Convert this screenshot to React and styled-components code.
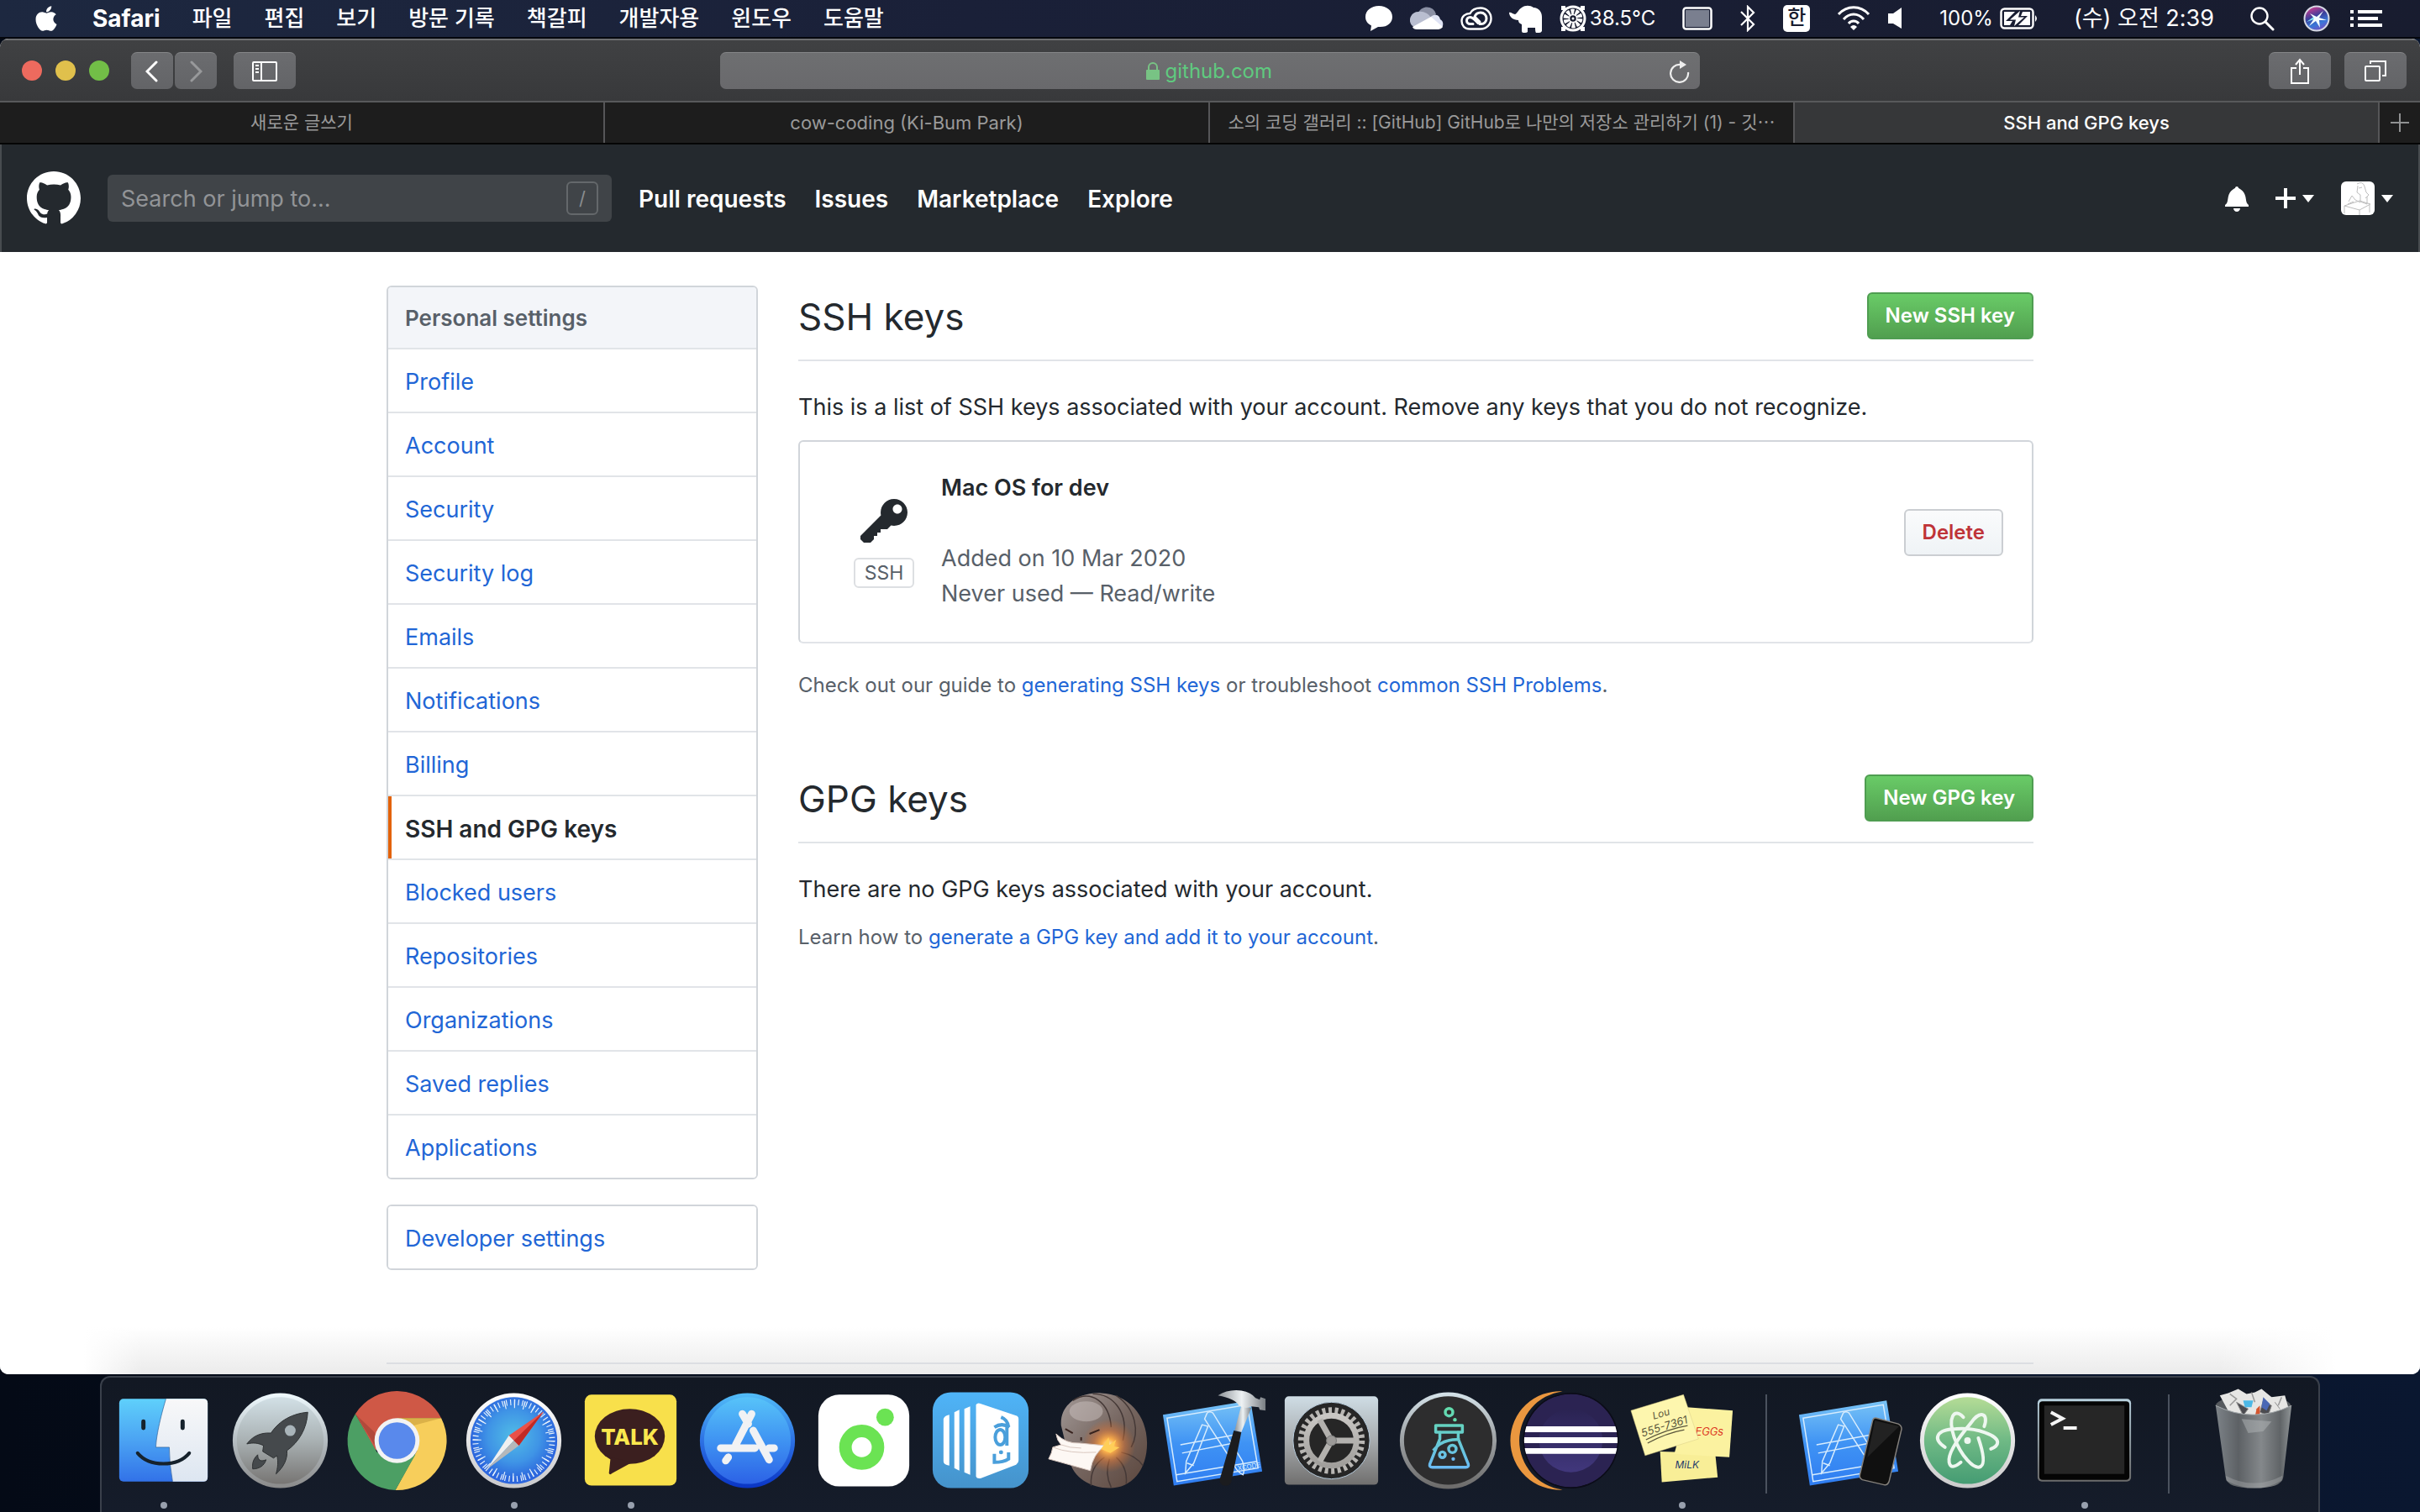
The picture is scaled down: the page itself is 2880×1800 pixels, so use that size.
import React from "react";
import styled, { createGlobalStyle } from "styled-components";
import { FaApple } from "react-icons/fa";

const GlobalStyle = createGlobalStyle`
  *, *::before, *::after { box-sizing: border-box; }
  html, body, #root { height: 100%; }
  body {
    margin: 0;
    background: #060d1c;
    font-family: Inter, "Noto Sans CJK KR", "Noto Sans", sans-serif;
    font-size: 27px;
    line-height: 42px;
    color: #24292e;
  }
  h2, p, ul, dl { margin: 0; padding: 0; }
  button, input { font: inherit; color: inherit; border: 0; padding: 0; margin: 0; background: none; }
  a { text-decoration: none; color: inherit; }
  svg { display: block; flex: none; }
`;

/* ---------- desktop ---------- */

const Desktop = styled.div`
  display: flex;
  flex-direction: column;
  height: 100vh;
  overflow: hidden;
  background: linear-gradient(90deg, #040a16, #0a1730);
`;

const MenuBar = styled.header`
  display: flex;
  align-items: center;
  justify-content: space-between;
  flex: none;
  height: 46px;
  padding: 0 45px 0 38px;
  background: linear-gradient(90deg, #1d2840, #1a2038 40%, #181c2f);
  border-bottom: 2px solid #05070d;
  color: #fff;
  font-size: 26px;
  line-height: 32px;
`;

const Menus = styled.nav`
  display: flex;
  align-items: center;
  gap: 38px;
`;

const MenuItem = styled.button`
  font-size: ${(p) => (p.$app ? 28 : 26)}px;
  font-weight: ${(p) => (p.$app ? 700 : 500)};
  white-space: nowrap;
`;

const Group = styled.div`
  display: flex;
  align-items: center;
  gap: ${(p) => p.$gap}px;
  white-space: nowrap;
`;

const Reading = styled.span`
  font-size: 24px;
`;

const Clock = styled.time`
  font-size: 27px;
`;

/* ---------- browser window ---------- */

const Window = styled.section`
  display: flex;
  flex-direction: column;
  flex: 1;
  min-height: 0;
  border-radius: 10px;
  overflow: hidden;
  background: #fff;
`;

const Toolbar = styled.div`
  display: grid;
  grid-template-columns: 1fr minmax(0, 1166px) 1fr;
  align-items: center;
  flex: none;
  height: 76px;
  padding: 0 16px;
  border-top: 2px solid #6d6e70;
  border-bottom: 2px solid #58595b;
  background: linear-gradient(#404143, #38393b);
`;

const ToolSide = styled.div`
  display: flex;
  align-items: center;
  gap: ${(p) => p.$gap}px;
  justify-content: ${(p) => (p.$end ? "flex-end" : "flex-start")};
`;

const Lights = styled.div`
  display: flex;
  gap: 16px;
  padding-left: 10px;
`;

const Light = styled.button`
  width: 24px;
  height: 24px;
  border-radius: 50%;
  background: ${(p) => p.$color};
`;

const ToolButton = styled.button`
  display: flex;
  align-items: center;
  justify-content: center;
  width: ${(p) => (p.$wide ? 74 : 50)}px;
  height: 44px;
  border-radius: 7px;
  border-top: 1px solid #858688;
  background: linear-gradient(#6b6c6f, #636467);
`;

const AddressBar = styled.form`
  display: grid;
  grid-template-columns: 1fr auto 1fr;
  align-items: center;
  height: 44px;
  padding: 0 12px;
  border-radius: 7px;
  border-top: 1px solid #858688;
  background: linear-gradient(#6e6f71, #69696c);
`;

const Address = styled.label`
  grid-column: 2;
  display: flex;
  align-items: center;
  gap: 7px;
`;

const AddressInput = styled.input`
  width: 130px;
  color: #5fca7f;
  font-size: 24px;
  line-height: 32px;
`;

const Reload = styled.button`
  justify-self: end;
`;

const TabBar = styled.div`
  display: grid;
  grid-template-columns: 720fr 720fr 696fr 696fr 48px;
  flex: none;
  height: 50px;
  border-bottom: 2px solid #050505;
  background: #1d1d1d;
`;

const Tab = styled.button`
  min-width: 0;
  padding: 0 14px;
  border-right: 2px solid #565658;
  background: ${(p) => (p.$active ? "#363739" : "transparent")};
  color: ${(p) => (p.$active ? "#fff" : "#9a9a9a")};
  font-size: 22px;
  font-weight: ${(p) => (p.$active ? 500 : 400)};
  line-height: 32px;
  white-space: nowrap;
  overflow: hidden;
  &:lang(ko) { font-size: 21px; }
`;

const NewTab = styled.button`
  display: flex;
  align-items: center;
  justify-content: center;
`;

/* ---------- site header ---------- */

const SiteHeader = styled.header`
  display: flex;
  align-items: center;
  flex: none;
  gap: 32px;
  height: 128px;
  padding: 0 32px;
  background: #24292e;
  box-shadow: inset 2px 0 #484c50, inset -2px 0 #484c50;
  color: #fff;
`;

const SearchBox = styled.label`
  display: flex;
  align-items: center;
  width: 600px;
  height: 56px;
  padding: 0 16px;
  border-radius: 6px;
  background: #404448;
`;

const SearchInput = styled.input`
  flex: 1;
  min-width: 0;
  padding-top: 2px;
  outline: 0;
  &::placeholder { color: #929497; opacity: 1; }
`;

const Slash = styled.kbd`
  display: flex;
  align-items: center;
  justify-content: center;
  width: 38px;
  height: 40px;
  border: 2px solid #64686b;
  border-radius: 6px;
  color: #8a8d90;
  font-family: inherit;
  font-size: 22px;
`;

const SiteNav = styled.nav`
  display: flex;
  gap: 34px;
  flex: 1;
  padding-top: 2px;
  font-size: 28px;
  font-weight: 600;
`;

const HeaderButton = styled.button`
  display: flex;
  align-items: center;
  gap: 8px;
`;

const Caret = styled.span`
  width: 14px;
  border: 7px solid transparent;
  border-top: 9px solid #fff;
  border-bottom: 0;
`;

const Avatar = styled.span`
  width: 40px;
  height: 40px;
  border-radius: 6px;
  overflow: hidden;
  background: #fff;
`;

/* ---------- page ---------- */

const Page = styled.div`
  flex: 1;
  min-height: 0;
  overflow: auto;
  background:
    linear-gradient(90deg, #fff 100px, transparent 170px, transparent calc(100% - 240px), #fff calc(100% - 100px)),
    linear-gradient(0deg, #ebebeb, #fff 56px);
`;

const Container = styled.div`
  max-width: 1960px;
  margin: 0 auto;
  padding-top: 40px;
`;

const Columns = styled.div`
  display: flex;
  gap: 48px;
`;

const Sidebar = styled.aside`
  flex: none;
  width: 442px;
`;

const SideMenu = styled.nav`
  display: flex;
  flex-direction: column;
  margin-bottom: 30px;
  border: 2px solid #d1d5da;
  border-radius: 6px;
  overflow: hidden;
`;

const SideHeading = styled.div`
  height: 74px;
  padding: 16px 20px;
  border-bottom: 2px solid #e1e4e8;
  background: #f3f5f9;
  color: #586069;
  font-size: 26px;
  font-weight: 600;
`;

const SideLink = styled.a`
  padding: 18px 20px 14px;
  border-bottom: 2px solid #e1e4e8;
  background: #fff;
  color: ${(p) => (p.$current ? "#24292e" : "#2166d6")};
  font-size: ${(p) => (p.$current ? 28 : 27)}px;
  font-weight: ${(p) => (p.$current ? 600 : 400)};
  box-shadow: ${(p) => (p.$current ? "inset 4px 0 #e36209" : "none")};
  &:last-child { border-bottom: 0; }
`;

const Main = styled.main`
  flex: 1;
  min-width: 0;
`;

const Section = styled.section`
  margin-bottom: 78px;
`;

const Subhead = styled.div`
  display: flex;
  align-items: flex-start;
  justify-content: space-between;
  height: 90px;
  padding-top: 8px;
  border-bottom: 2px solid #e1e4e8;
`;

const Title = styled.h2`
  font-size: 44px;
  line-height: 58px;
  font-weight: 400;
`;

const Lead = styled.p`
  padding-top: 34px;
`;

const Button = styled.button`
  height: 56px;
  padding: 0 20px;
  border: 2px solid ${(p) => (p.$danger ? "#cbced2" : "#4f9d51")};
  border-radius: 6px;
  background: ${(p) => (p.$danger ? "linear-gradient(#fafbfc, #eff3f6)" : "linear-gradient(#69cb67, #519f4f)")};
  color: ${(p) => (p.$danger ? "#bf3338" : "#fff")};
  font-size: 24px;
  line-height: 40px;
  font-weight: 600;
`;

const KeyCard = styled.div`
  display: flex;
  align-items: center;
  margin: 18px 0 30px;
  padding: 34px 34px 30px 64px;
  border: 2px solid #d1d5da;
  border-bottom-color: #e1e4e8;
  border-radius: 6px;
`;

const KeyMark = styled.div`
  display: flex;
  flex-direction: column;
  align-items: center;
  gap: 10px;
  width: 72px;
  margin-right: 32px;
  padding-bottom: 4px;
`;

const KeyAction = styled.div`
  padding-bottom: 26px;
`;

const Badge = styled.span`
  width: 72px;
  border: 2px solid #dddfe2;
  border-radius: 6px;
  color: #586069;
  font-size: 23px;
  line-height: 32px;
  text-align: center;
`;

const KeyInfo = styled.div`
  flex: 1;
  padding-bottom: 6px;
  color: #586069;
`;

const KeyName = styled.strong`
  display: block;
  margin-bottom: 42px;
  color: #24292e;
  font-weight: 600;
`;

const Note = styled.p`
  margin-top: ${(p) => (p.$tight ? 16 : 0)}px;
  color: #586069;
  font-size: 24px;
  line-height: 40px;
`;

const TextLink = styled.a`
  color: #2166d6;
`;

const Footer = styled.footer`
  margin-top: 80px;
  border-top: 2px solid #dcdee2;
`;

/* ---------- dock ---------- */

const Dock = styled.nav`
  display: flex;
  align-self: center;
  flex: none;
  height: 162px;
  margin-top: 2px;
  padding: 0 8px 0 4px;
  border: 2px solid #3a404b;
  border-bottom: 0;
  border-radius: 12px 12px 0 0;
  background: linear-gradient(#121823, #151c2a);
`;

const DockItem = styled.button`
  display: flex;
  flex-direction: column;
  align-items: center;
  gap: 4px;
  width: 139px;
`;

const RunningDot = styled.span`
  width: 8px;
  height: 8px;
  border-radius: 50%;
  background: #98a0ae;
`;

const Separator = styled.span`
  width: 2px;
  height: 118px;
  margin: 20px 30px 0;
  background: #4b525e;
`;

/* ---------- menu bar drawings ---------- */

const ChatIcon = () => (
  <svg width="34" height="32" viewBox="0 0 34 32">
    <path fill="#fff" d="M17 1C8 1 1 6.500 1 14c0 5 2.500 8 7 10.500L7 31l9-5c11 1 17-5 17-12C33 6.500 26 1 17 1z" />
  </svg>
);

const CloudIcon = () => (
  <svg width="40" height="28" viewBox="0 0 40 28">
    <path fill="#8b90a4" d="M10 7C14-2 28-2 31 9l-9 8z" />
    <path fill="#b9bed0" d="M10 6a10 10 0 0 0-8 16l4 3 19-12C22 8 16 5 10 6z" />
    <path fill="#dfe3f4" d="M24 13c4-5 11-4 12 2 4 2 4 7 2 10z" />
    <path fill="#fff" d="M3 24 25 12l14 12q-2 3-5 3H8q-4 0-5-3z" />
  </svg>
);

const CreativeCloudIcon = () => (
  <svg width="38" height="28" viewBox="0 0 38 28" fill="none" stroke="#fff" strokeLinecap="round">
    <path strokeWidth="2.400" d="M11 26.500C5 26.500 1.500 22.500 1.500 17S6 8 11.500 8C13.500 4 18 1.500 24 1.500c7 0 12.500 5.500 12.500 12.500S31 26.500 24 26.500z" />
    <path strokeWidth="3" d="M15 20.500h-3.500a4 4 0 0 1 0-8c3 0 4.500 2 6.500 4l3 3" />
    <path strokeWidth="3" d="m23 18-6-6c1-3 4-5 7-5 4 0 7 3 7 7s-3 6.500-6 6.500h-2" />
  </svg>
);

const ElephantIcon = () => (
  <svg width="40" height="34" viewBox="0 0 40 34">
    <path fill="#fff" d="M0 10c2-1 4 2 7 2 3-1 4-6 8-8 4-3 10-3 14 0 6 0 10 5 10 11v17q-1 2-3 2h-4q-1-1-1-6h-9v5q-1 1-3 1h-2q-2 0-2-2v-8c-3-1-4-3-4-5C5 19 0 15 0 10z" />
  </svg>
);

const FanIcon = () => (
  <svg width="32" height="32" viewBox="0 0 32 32">
    <path fill="#fff" d="M2 1h5v5H2zM25 1h5v5h-5zM2 26h5v5H2zM25 26h5v5h-5z" />
    <circle cx="16" cy="16" r="14" fill="#181c2f" stroke="#fff" strokeWidth="3" />
    {[0, 36, 72, 108, 144, 180, 216, 252, 288, 324].map((a) => (
      <path key={a} fill="#fff" transform={`rotate(${a} 16 16)`} d="m14.500 12-1.500-7q3-1 5 0l-1.500 7z" />
    ))}
    <circle cx="16" cy="16" r="4.500" fill="#181c2f" stroke="#fff" strokeWidth="1.500" />
    <circle cx="16" cy="16" r="1.500" fill="#fff" />
  </svg>
);

const DisplayIcon = () => (
  <svg width="36" height="28" viewBox="0 0 36 28">
    <rect x="1.500" y="1.500" width="33" height="25" rx="3" fill="none" stroke="#fff" strokeWidth="2.500" />
    <rect x="4" y="4" width="28" height="20" fill="#7a7f8f" />
  </svg>
);

const BluetoothIcon = () => (
  <svg width="20" height="32" viewBox="0 0 20 32" fill="none" stroke="#fff" strokeWidth="2.200">
    <path d="m2 8 15 15-7 7V2l7 7L2 24" />
  </svg>
);

const InputSource = styled.span`
  width: 32px;
  height: 32px;
  border-radius: 5px;
  background: #fff;
  color: #181c2f;
  font-size: 24px;
  font-weight: 500;
  line-height: 30px;
  text-align: center;
`;

const WifiIcon = () => (
  <svg width="40" height="30" viewBox="0 0 40 30" fill="none" stroke="#fff" strokeWidth="3">
    <path d="M2 10C12-1 28-1 38 10M8 16c7-8 17-8 24 0M14 21c3-4 9-4 12 0" />
    <path d="m20 29-4-4q4-4 8 0z" fill="#fff" stroke="none" />
  </svg>
);

const SpeakerIcon = () => (
  <svg width="20" height="28" viewBox="0 0 20 28">
    <path fill="#fff" d="M1 8h6L17 1v25L7 20H1z" />
  </svg>
);

const BatteryIcon = () => (
  <svg width="46" height="26" viewBox="0 0 46 26">
    <rect x="1.500" y="1.500" width="38" height="23" rx="4" fill="none" stroke="#fff" strokeWidth="2.400" />
    <path fill="#fff" d="M5 5h13l-11 11h8l-3 5H5zM27 5h9v16H22l11-11h-8zM42 9q4 4 0 8z" />
    <path fill="#fff" d="M24 4 12 14.500h7L17 22l12-10.500h-7z" />
  </svg>
);

const SpotlightIcon = () => (
  <svg width="30" height="30" viewBox="0 0 30 30" fill="none" stroke="#fff">
    <circle cx="12" cy="12" r="9.500" strokeWidth="2.400" />
    <path d="m19 19 9 9" strokeWidth="3" strokeLinecap="round" />
  </svg>
);

const SiriIcon = () => (
  <svg width="32" height="32" viewBox="0 0 32 32">
    <defs>
      <linearGradient id="siri" x1=".3" y1="0" x2=".7" y2="1">
        <stop offset="0" stopColor="#d23b8d" />
        <stop offset=".4" stopColor="#3b3f9a" />
        <stop offset=".7" stopColor="#3a78d8" />
        <stop offset="1" stopColor="#7b4bc0" />
      </linearGradient>
    </defs>
    <circle cx="16" cy="16" r="14.500" fill="url(#siri)" stroke="#d5d8e4" strokeWidth="2" />
    <path fill="#7fe6f5" d="m16 16-12 4 10-7z" />
    <path fill="#f3fdff" d="m16 14 8-7-5 8 9 3-9 0 1 9-5-8-8 6 6-9-5-6z" />
  </svg>
);

const ListIcon = () => (
  <svg width="38" height="22" viewBox="0 0 38 22" fill="#fff">
    <path d="M0 1h4v4H0zM9 1h29v4H9zM0 9h4v4H0zM9 9h24v4H9zM0 17h4v4H0zM9 17h29v4H9z" />
  </svg>
);

/* ---------- toolbar drawings ---------- */

const Chevron = ({ forward }) => (
  <svg width="16" height="26" viewBox="0 0 16 26" fill="none" stroke={forward ? "#98999b" : "#fff"} strokeWidth="3" strokeLinecap="round">
    <path d={forward ? "m3 2 11 11L3 24" : "M13 2 2 13l11 11"} />
  </svg>
);

const SidebarIcon = () => (
  <svg width="30" height="24" viewBox="0 0 30 24" fill="none" stroke="#fff" strokeWidth="2">
    <rect x="1" y="1" width="28" height="22" rx="1" />
    <path d="M11 1v22M4 5h4M4 9h4M4 13h4" />
  </svg>
);

const LockIcon = () => (
  <svg width="16" height="22" viewBox="0 0 16 22">
    <rect y="9" width="16" height="12" rx="1" fill="#78c384" />
    <path d="M3 9V6a5 5 0 0 1 10 0v3" fill="none" stroke="#78c384" strokeWidth="2" />
  </svg>
);

const ReloadIcon = () => (
  <svg width="24" height="28" viewBox="0 0 24 28">
    <path d="M22 15a10.500 10.500 0 1 1-9-9" fill="none" stroke="#eee" strokeWidth="2.200" />
    <path d="m12 1 8 5-8 5z" fill="#eee" />
  </svg>
);

const ShareIcon = () => (
  <svg width="24" height="32" viewBox="0 0 24 32" fill="none" stroke="#fff" strokeWidth="2">
    <path d="M8 12H2v18h20V12h-6M12 20V3M7 8l5-6 5 6" />
  </svg>
);

const TabsIcon = () => (
  <svg width="26" height="26" viewBox="0 0 26 26" fill="none" stroke="#fff" strokeWidth="2">
    <rect x="1" y="7" width="17" height="17" rx="1" />
    <path d="M7 4V1h18v17h-4" />
  </svg>
);

const PlusThin = () => (
  <svg width="22" height="22" viewBox="0 0 22 22" stroke="#909192" strokeWidth="2">
    <path d="M11 0v22M0 11h22" />
  </svg>
);

/* ---------- site drawings ---------- */

const MarkIcon = () => (
  <svg width="64" height="64" viewBox="0 0 16 16" fill="#fff">
    <path d="M8 0C3.58 0 0 3.58 0 8c0 3.54 2.29 6.53 5.47 7.59.4.07.55-.17.55-.38 0-.19-.01-.82-.01-1.49-2.01.37-2.53-.49-2.69-.94-.09-.23-.48-.94-.82-1.13-.28-.15-.68-.52-.01-.53.63-.01 1.08.58 1.23.82.72 1.21 1.87.87 2.33.66.07-.52.28-.87.51-1.07-1.78-.2-3.64-.89-3.64-3.95 0-.87.31-1.59.82-2.15-.08-.2-.36-1.02.08-2.12 0 0 .67-.21 2.2.82.64-.18 1.32-.27 2-.27.68 0 1.36.09 2 .27 1.53-1.04 2.2-.82 2.2-.82.44 1.1.16 1.92.08 2.12.51.56.82 1.27.82 2.15 0 3.07-1.87 3.75-3.65 3.95.29.25.54.73.54 1.48 0 1.07-.01 1.93-.01 2.2 0 .21.15.46.55.38A8.013 8.013 0 0016 8c0-4.42-3.58-8-8-8z" />
  </svg>
);

const BellIcon = () => (
  <svg width="28" height="32" viewBox="0 0 14 16" fill="#fff">
    <path d="M14 12v1H0v-1l.73-.58c.77-.77.81-2.55 1.19-4.42C2.69 3.23 6 2 6 2c0-.55.45-1 1-1s1 .45 1 1c0 0 3.39 1.23 4.16 5 .38 1.88.42 3.66 1.19 4.42l.66.58H14zm-7 4c1.11 0 2-.89 2-2H5c0 1.11.89 2 2 2z" />
  </svg>
);

const PlusIcon = () => (
  <svg width="24" height="32" viewBox="0 0 12 16" fill="#fff">
    <path d="M12 9H7v5H5V9H0V7h5V2h2v5h5v2z" />
  </svg>
);

const KeyIcon = () => (
  <svg width="56" height="64" viewBox="0 0 14 16" fill="#24292e">
    <path d="M12.83 2.17C12.08 1.42 11.14 1.03 10 1c-1.13.03-2.08.42-2.83 1.17S6.04 3.86 6.01 5c0 .3.03.59.09.89L0 12v1l1 1h2l1-1v-1h1v-1h1v-1h2l1.09-1.11c.3.08.59.11.91.11 1.14-.03 2.08-.42 2.83-1.17S13.97 6.14 14 5c-.03-1.14-.42-2.08-1.17-2.83zM11 5.38c-.77 0-1.38-.61-1.38-1.38 0-.77.61-1.38 1.38-1.38.77 0 1.38.61 1.38 1.38 0 .77-.61 1.38-1.38 1.38z" />
  </svg>
);

const AvatarSketch = () => (
  <svg width="40" height="40" viewBox="0 0 40 40" fill="none" stroke="#bdbdbd" strokeWidth="1">
    <path d="M19 3q7-4 9 3l2 7 3 3-4 4M20 5l-1 8 4 3v8l8 3v-9M4 29l18-6 13 4-13 7zM4 29v9M22 34v6M34 28v9M9 24l4-7 4 5 6 3M8 27l7-3M21 8l4-1" />
  </svg>
);

/* ---------- dock drawings ---------- */

const Gradient = ({ id, stops }) => (
  <linearGradient id={id} x1="0" y1="0" x2="0" y2="1">
    {stops.map((color, i) => (
      <stop key={i} offset={i / (stops.length - 1)} stopColor={color} />
    ))}
  </linearGradient>
);

const DockArt = ({ children }) => (
  <svg width="139" height="144" viewBox="-70 -75 140 144">{children}</svg>
);

const Finder = () => (
  <DockArt>
    <defs>
      <Gradient id="fl" stops={["#5fd0fb", "#4ba3f3", "#3272e8"]} />
      <Gradient id="fr" stops={["#f8f8f9", "#dde6f1"]} />
    </defs>
    <rect x="-53" y="-50" width="106" height="99" rx="5" fill="url(#fl)" />
    <path d="M3-50C-6-20-9 0-9 8H7q0 20 4 41h37q5 0 5-5v-89q0-5-5-5z" fill="url(#fr)" />
    <path d="M3-50C-6-20-9 0-9 8H7q0 20 4 41" fill="none" stroke="#1b4f8a" strokeOpacity=".6" />
    <path d="M-24-23v8M23-23v8" stroke="#16222c" strokeWidth="5" strokeLinecap="round" />
    <path d="M-31 15c14 17 48 17 62 0" fill="none" stroke="#16222c" strokeWidth="4" strokeLinecap="round" />
  </DockArt>
);

const Launchpad = () => (
  <DockArt>
    <defs>
      <Gradient id="lp1" stops={["#f0fbff", "#b5bdc2", "#8a8a8a"]} />
      <Gradient id="lp2" stops={["#d2e0e6", "#a9b1b3", "#777573"]} />
    </defs>
    <circle r="57" fill="url(#lp1)" />
    <circle r="52" fill="url(#lp2)" />
    <path d="M33-34C10-32-4-20-11-9-25-10-34-4-40 4c8-2 14-1 20 2l-1 7 13 8 4-3c2 7 1 15-1 22 9-8 14-18 13-28C22 2 32-14 33-34zM-33 34c-1-9 2-13 6-17 0 6 3 9 10 6-2 7-8 11-16 11z" fill="#45494c" stroke="#2d3032" />
    <circle cx="12" cy="-12" r="6.500" fill="#a9b4b9" />
  </DockArt>
);

const Chrome = () => (
  <DockArt>
    <path d="M-50-32A59.500 59.500 0 0 1 53-27H0L-26 12z" fill="#cf5846" />
    <path d="M53-27A59.500 59.500 0 0 1-2 59.500L24 12 0-27z" fill="#f7ce5b" />
    <path d="M-2 59.500A59.500 59.500 0 0 1-50-32L-24 14 22 17z" fill="#4c9f64" />
    <path d="m-50-32 26 42-3-20z" fill="#9c4034" opacity=".6" />
    <path d="M0-27h53L20-18z" fill="#c09335" opacity=".5" />
    <circle r="27" fill="#f3f3f3" />
    <circle r="22" fill="#5989ec" />
  </DockArt>
);

const Safari = () => (
  <DockArt>
    <defs>
      <radialGradient id="sf" cy=".45">
        <stop offset="0" stopColor="#51bde6" />
        <stop offset=".6" stopColor="#3f94e6" />
        <stop offset="1" stopColor="#2c66dd" />
      </radialGradient>
      <Gradient id="sfr" stops={["#fff", "#c9c9cb"]} />
    </defs>
    <circle r="57" fill="url(#sfr)" />
    <circle r="52" fill="url(#sf)" />
    <circle r="46" fill="none" stroke="#e6f1fb" strokeWidth="7" strokeDasharray="1.200 3.617" />
    <circle r="44" fill="none" stroke="#e6f1fb" strokeWidth="10" strokeDasharray="1.300 10.220" />
    <path d="M36-35-6-6 6 6z" fill="#ea5148" />
    <path d="M36-35 0 0l6 6z" fill="#c12a25" />
    <path d="M-33 35-6-6 0 0z" fill="#f0f0f0" />
    <path d="M-33 35 6 6 0 0z" fill="#b5b8ba" />
  </DockArt>
);

const Talk = () => (
  <DockArt>
    <rect x="-55" y="-55" width="110" height="109" rx="8" fill="#f8e04b" />
    <ellipse cx="-1" cy="-5" rx="42" ry="33" fill="#3b1f1f" />
    <path d="m-24 20-2 19q1 3 4 0L2 26z" fill="#3b1f1f" />
    <text x="-1" y="5" textAnchor="middle" fontFamily="Inter, sans-serif" fontWeight="800" fontSize="26" fill="#fbe84e">TALK</text>
  </DockArt>
);

const AppStore = () => (
  <DockArt>
    <defs>
      <Gradient id="as1" stops={["#52bdf8", "#2d71e4", "#0a35c4"]} />
      <Gradient id="as2" stops={["#57c3f9", "#3f93f2", "#2c62e6"]} />
    </defs>
    <circle r="57" fill="url(#as1)" />
    <circle r="52" fill="url(#as2)" />
    <g stroke="#f1f2f4" strokeWidth="9" strokeLinecap="round">
      <path d="M-32 9h41M26 9h6M5-32-14 5M-6-32 1-20M7-12l19 35M-23 20l-3 4" />
    </g>
  </DockArt>
);

const GreenDot = () => (
  <DockArt>
    <rect x="-55" y="-55" width="109" height="110" rx="25" fill="#fff" />
    <circle cx="-3" cy="8" r="19.500" fill="none" stroke="#6be353" strokeWidth="15" />
    <circle cx="25" cy="-28" r="10.500" fill="#6be353" />
  </DockArt>
);

const BookApp = () => (
  <DockArt>
    <defs><Gradient id="bk" stops={["#4fb4f8", "#4593cb"]} /></defs>
    <rect x="-58" y="-58" width="115" height="115" rx="22" fill="url(#bk)" />
    <g fill="#fff">
      <path d="M-45-26q1-4 7-5v61q-7-1-7-5zM-32-34l6-3v73l-6-3zM-20-38l7-3v82l-7-3zM-6-43q2-3 6-1l42 14q3 1 3 4v50q0 3-3 5L0 45q-5 1-6-2z" />
    </g>
    <g fill="none" stroke="#4a9fdb" strokeWidth="4">
      <ellipse cx="23" cy="-4" rx="6" ry="9" />
      <path d="M24-28q8 3 9 12M16-16q9-6 18 0M31-16v22M16 16v10q11 0 17-4V14" />
    </g>
    <circle cx="24" cy="14" r="2.500" fill="#4a9fdb" />
  </DockArt>
);

const BugApp = () => (
  <DockArt>
    <defs>
      <linearGradient id="bg1" x1="0" y1="0" x2="1" y2="1">
        <stop offset="0" stopColor="#a39a98" />
        <stop offset=".5" stopColor="#75655f" />
        <stop offset="1" stopColor="#5b463d" />
      </linearGradient>
      <radialGradient id="bg2">
        <stop offset="0" stopColor="#fff6c0" />
        <stop offset=".25" stopColor="#fbb04c" />
        <stop offset=".6" stopColor="#e07a3a" stopOpacity=".5" />
        <stop offset="1" stopColor="#d06a2a" stopOpacity="0" />
      </radialGradient>
    </defs>
    <path d="M-44-18C-46-44-22-58 4-57c32 1 55 26 55 60 0 32-18 54-45 54-22 0-44-12-48-34z" fill="url(#bg1)" />
    <g fill="none" stroke="#453937" strokeWidth="1.500">
      <path d="M-30-48C-8-62 14-46 16-16M-6-56C18-56 38-34 30 0M22-54C46-38 50-10 40 8M8 20q-18 12-16 34M14 22q-6 18 2 34M22 20q14 12 12 32M28 14q18 4 26 16" />
    </g>
    <ellipse cx="-14" cy="-35" rx="20" ry="12" fill="#c9c0be" opacity=".5" />
    <circle cx="13" cy="6" r="32" fill="url(#bg2)" />
    <path d="m-39-14 9 5M-10-8l12-5M-20-4v4" stroke="#38231e" strokeWidth="2" />
    <path d="M-50-8Q-38 4-22 3L9 6Q-6 16-9 36-30 30-59 22q4-7 5-14l10-3q-5-5-6-13z" fill="#fdf8f4" stroke="#d9c8bf" />
    <path d="M-54 8q20 8 52 6M-44 5q10 4 24 4" fill="none" stroke="#d9c8bf" />
    <path d="m4 10 9-14 1 9 8-6-3 8 7 1-11 7z" fill="#ffce58" />
  </DockArt>
);

const Blueprint = ({ id, label }) => (
  <g>
    <defs><Gradient id={id} stops={["#79c4f6", "#3f93f4", "#2f7df2"]} /></defs>
    <path d="M-62-31 43-48 57 37-49 54z" fill={`url(#${id})`} />
    <g fill="none" stroke="#d7ecfd" strokeWidth="1.500">
      <path d="M-57-27 39-43 52 33-45 49zM-46 41 51 25" />
      <path d="M-9-33q3-3 7 0L33 24q4 10 1 17-8-4-11-13L-12-26zM-15-19l7 2-17 44-10 12 1-14zM-33 27l8 3M-41 5 25-7M-39 15 28 2" />
    </g>
    {label && <text x="28" y="36" transform="rotate(-9 28 36)" fontSize="8" fill="#d7ecfd" fontFamily="Inter, sans-serif">XCODE</text>}
  </g>
);

const Xcode = () => (
  <DockArt>
    <defs>
      <linearGradient id="hm"><stop offset="0" stopColor="#8b9196" /><stop offset=".5" stopColor="#eef2f4" /><stop offset="1" stopColor="#787d82" /></linearGradient>
    </defs>
    <Blueprint id="xb" label />
    <path d="m32-42 12 3L32-10l-8-2z" fill="url(#hm)" />
    <path d="m23-12 9 2-12 60q-2 5-8 4t-6-7z" fill="#1b1c1f" />
    <path d="M4-54q12-8 28-6 12 2 17 9l5 2 1-3 6 2v14l-7-1-1-3-9-1q-7 4-15-1Q25-50 4-54z" fill="url(#hm)" />
  </DockArt>
);

const Preferences = () => (
  <DockArt>
    <defs>
      <Gradient id="pr1" stops={["#cfdde5", "#a7abae", "#706f6e"]} />
      <Gradient id="pr2" stops={["#c9c7c4", "#a09e9b"]} />
    </defs>
    <rect x="-56" y="-53" width="112" height="106" rx="5" fill="url(#pr1)" />
    <circle r="46" fill="#262626" stroke="#b9cede" />
    <circle r="36" fill="none" stroke="#b8b6b3" strokeWidth="8" strokeDasharray="4 3.540" />
    <circle r="30" fill="none" stroke="url(#pr2)" strokeWidth="7" />
    <g stroke="#b3b1ae" strokeWidth="7">
      <path d="M0 0h28M0 0l-14-25M0 0l-14 25" />
    </g>
    <circle r="6" fill="#9c9a98" stroke="#777" />
  </DockArt>
);

const Flask = () => (
  <DockArt>
    <defs>
      <Gradient id="fk1" stops={["#d5e3ea", "#9b9fa2", "#6b6a69"]} />
      <linearGradient id="fk2" gradientUnits="userSpaceOnUse" x1="0" y1="-40" x2="0" y2="34">
        <stop offset="0" stopColor="#62dcaa" /><stop offset="1" stopColor="#6bbaf5" />
      </linearGradient>
    </defs>
    <circle r="58" fill="url(#fk1)" />
    <circle r="53" fill="#2d2d2e" />
    <g fill="none" stroke="url(#fk2)" strokeWidth="3.500" strokeLinejoin="round">
      <path d="M-15-18h32v8h-5v8l12 30q1 4-3 4h-40q-4 0-3-4l12-30v-8h-5zM-18 12q8-10 18-12 8-2 14-1" />
      <path d="M-10-10h22" />
      <circle cx="1" cy="-34" r="4.500" /><circle cx="5" cy="10" r="4.500" /><circle cx="-7" cy="17" r="3.500" />
    </g>
    <circle cx="8" cy="-25" r="2.200" fill="#62dcaa" />
    <circle cx="6" cy="22" r="2.200" fill="#6bbaf5" />
  </DockArt>
);

const Eclipse = () => (
  <DockArt>
    <defs>
      <clipPath id="ecc"><circle cx="7" r="56" /></clipPath>
      <Gradient id="ecg" stops={["#2a2352", "#41377c"]} />
    </defs>
    <path d="M-3-59A59.100 59.100 0 1 0-3 59 59.500 59.500 0 0 1-3-59z" fill="#ea973f" />
    <circle cx="7" r="57.500" fill="#0b0c18" />
    <g clipPath="url(#ecc)">
      <circle cx="7" r="56" fill="#2b2352" />
      <circle cx="7" r="38" fill="url(#ecg)" />
      <path d="M-50-17H64v7H-50zM-50-4H64v7H-50zM-50 9H64v7H-50z" fill="#fff" />
    </g>
  </DockArt>
);

const Stickies = () => (
  <DockArt>
    <g fontFamily="Inter, sans-serif">
      <path d="m-26 13 66 2 3 29-67 6z" fill="#f8ee97" />
      <text x="-8" y="33" fontSize="12" fontStyle="italic" fill="#1e3a6b">MiLK</text>
      <path d="m6-40 55 4-4 56-66-4z" fill="#fbf2a0" />
      <text x="16" y="-6" fontSize="13" fontStyle="italic" fill="#dd3a25">EGGs</text>
      <path d="M-61-36 2-55 20-2-44 18z" fill="#fdf6ae" stroke="#d8cd85" strokeWidth=".5" />
      <g transform="rotate(-17)" fill="#5a563c" fontStyle="italic">
        <text x="-25" y="-34" fontSize="12">Lou</text>
        <text x="-44" y="-18" fontSize="13">555-7361</text>
      </g>
      <path d="M-43-1q26-13 50-17M-41 3q22-12 44-16" fill="none" stroke="#5a563c" strokeWidth="1.300" />
    </g>
  </DockArt>
);

const Simulator = () => (
  <DockArt>
    <Blueprint id="sb" />
    <path d="M31-27 57-20q4 2 4 6L46 49q-2 5-6 4L14 47q-4-2-3-6L26-23q1-5 5-4z" fill="#101010" stroke="#84807b" strokeWidth="1.500" />
    <path d="m29-24 29 7L20 20z" fill="#2b2b2b" opacity=".7" />
  </DockArt>
);

const Atom = () => (
  <DockArt>
    <defs>
      <Gradient id="at" stops={["#b5dc96", "#6fb985", "#459c73"]} />
      <Gradient id="atr" stops={["#fff", "#cbcbcb"]} />
    </defs>
    <circle r="57" fill="url(#atr)" />
    <circle r="52" fill="url(#at)" />
    <g fill="none" stroke="#eef7f0" strokeWidth="4" strokeLinecap="round">
      <path d="M-27 8C-42-2-38-13-14-14 12-16 36-6 36 2q0 5-8 8" />
      <path d="M-5-28C-16-40-24-28-16-4-8 18 8 36 16 31q7-5-3-34" />
      <path d="M20-17C26-34 14-36 4-21-12-2-24 16-22 26q2 10 14 0" />
    </g>
    <circle r="4" fill="#eef7f0" />
  </DockArt>
);

const Terminal = () => (
  <DockArt>
    <defs><Gradient id="tm" stops={["#b8d1de", "#6b6b6b"]} /></defs>
    <rect x="-56" y="-50" width="112" height="99" rx="5" fill="url(#tm)" />
    <rect x="-54" y="-47" width="108" height="94" rx="4" fill="#050505" />
    <rect x="-48" y="-42" width="96" height="82" fill="#262626" />
    <path d="m-40-34 14 7.500-14 7.500M-25-15h16" fill="none" stroke="#f5f5f5" strokeWidth="4" />
  </DockArt>
);

const Trash = () => (
  <DockArt>
    <defs>
      <linearGradient id="tr">
        <stop offset="0" stopColor="#7d8388" /><stop offset=".3" stopColor="#5d6165" />
        <stop offset=".6" stopColor="#84888b" /><stop offset=".85" stopColor="#606467" /><stop offset="1" stopColor="#8f9496" />
      </linearGradient>
    </defs>
    <ellipse cy="-42" rx="45" ry="12" fill="#55595d" />
    <path d="m-40-54 10-3 12-5 10 6 10-2 8-4 12 10 16-2 4 14-10 10-60-2z" fill="#e6e6e4" />
    <path d="m-20-46 14 8-6 8zM12-48l10 6-4 12-10-4zM26-46l6 8" fill="#4b4b50" stroke="#8d8d8d" />
    <path d="m-12-48 12 0-2 8-8 0z" fill="#4cb8e6" />
    <path d="m4-38 4-4 0 14-6 0z" fill="#d4552e" />
    <path d="m12-52 8 8-4 8-6-4z" fill="#4a68b5" />
    <path d="m-28-56 8 6-8 8M-2-58l4 12M34-52l-4 10" fill="none" stroke="#999" strokeWidth="1.500" />
    <path d="M-45-42q45 22 91 0L36 44q-2 13-35 13T-33 44z" fill="url(#tr)" />
    <path d="M-45-42q45 22 91 0" fill="none" stroke="#a3a8ab" />
    <path d="M-33 42q34 18 68 0l-1 6q-32 18-66 0z" fill="#a9adaf" opacity=".4" />
    <path d="m-14-26 36 3-10 12-18 2z" fill="#b0b3b5" opacity=".5" />
  </DockArt>
);

/* ---------- data ---------- */

const MENUS = ["파일", "편집", "보기", "방문 기록", "책갈피", "개발자용", "윈도우", "도움말"];

const TABS = [
  { title: "새로운 글쓰기", lang: "ko" },
  { title: "cow-coding (Ki-Bum Park)", lang: "en" },
  { title: "소의 코딩 갤러리 :: [GitHub] GitHub로 나만의 저장소 관리하기 (1) - 깃⋯", lang: "ko" },
  { title: "SSH and GPG keys", lang: "en", active: true },
];

const SETTINGS = [
  "Profile", "Account", "Security", "Security log", "Emails", "Notifications", "Billing",
  "SSH and GPG keys", "Blocked users", "Repositories", "Organizations", "Saved replies", "Applications",
];

const DOCK = [
  [["Finder", Finder, true], ["Launchpad", Launchpad], ["Chrome", Chrome], ["Safari", Safari, true],
   ["KakaoTalk", Talk, true], ["App Store", AppStore], ["Green", GreenDot], ["Books", BookApp],
   ["Bug", BugApp], ["Xcode", Xcode], ["Preferences", Preferences], ["Flask", Flask],
   ["Eclipse", Eclipse], ["Stickies", Stickies, true]],
  [["Simulator", Simulator], ["Atom", Atom], ["Terminal", Terminal, true]],
  [["Trash", Trash]],
];

/* ---------- app ---------- */

export default function App() {
  return (
    <Desktop>
      <GlobalStyle />
      <MenuBar>
        <Menus>
          <MenuItem aria-label="Apple"><FaApple size={34} /></MenuItem>
          <MenuItem $app>Safari</MenuItem>
          {MENUS.map((m) => <MenuItem key={m}>{m}</MenuItem>)}
        </Menus>
        <Group $gap={42}>
          <Group $gap={32}>
            <Group $gap={20}>
              <ChatIcon /><CloudIcon /><CreativeCloudIcon /><ElephantIcon />
              <Group $gap={4}><FanIcon /><Reading>38.5°C</Reading></Group>
            </Group>
            <DisplayIcon />
            <BluetoothIcon />
            <InputSource>한</InputSource>
            <Group $gap={20}><WifiIcon /><SpeakerIcon /></Group>
          </Group>
          <Group $gap={8}><Reading>100%</Reading><BatteryIcon /></Group>
          <Clock>(수) 오전 2:39</Clock>
          <Group $gap={34}>
            <SpotlightIcon />
            <Group $gap={24}><SiriIcon /><ListIcon /></Group>
          </Group>
        </Group>
      </MenuBar>

      <Window>
        <Toolbar>
          <ToolSide $gap={20}>
            <ToolSide $gap={26}>
              <Lights>
                <Light $color="#ed6a5e" aria-label="Close" />
                <Light $color="#e0c04c" aria-label="Minimize" />
                <Light $color="#72be47" aria-label="Zoom" />
              </Lights>
              <ToolSide $gap={2}>
                <ToolButton aria-label="Back"><Chevron /></ToolButton>
                <ToolButton aria-label="Forward"><Chevron forward /></ToolButton>
              </ToolSide>
            </ToolSide>
            <ToolButton $wide aria-label="Sidebar"><SidebarIcon /></ToolButton>
          </ToolSide>
          <AddressBar onSubmit={(e) => e.preventDefault()}>
            <Address>
              <LockIcon />
              <AddressInput aria-label="Address" defaultValue="github.com" />
            </Address>
            <Reload type="button" aria-label="Reload"><ReloadIcon /></Reload>
          </AddressBar>
          <ToolSide $gap={16} $end>
            <ToolButton $wide aria-label="Share"><ShareIcon /></ToolButton>
            <ToolButton $wide aria-label="Tabs"><TabsIcon /></ToolButton>
          </ToolSide>
        </Toolbar>
        <TabBar>
          {TABS.map((t) => <Tab key={t.title} lang={t.lang} $active={t.active}>{t.title}</Tab>)}
          <NewTab aria-label="New tab"><PlusThin /></NewTab>
        </TabBar>

        <SiteHeader>
          <a href="#home" aria-label="Home"><MarkIcon /></a>
          <SearchBox>
            <SearchInput aria-label="Search" placeholder="Search or jump to..." />
            <Slash>/</Slash>
          </SearchBox>
          <SiteNav>
            <a href="#pulls">Pull requests</a>
            <a href="#issues">Issues</a>
            <a href="#marketplace">Marketplace</a>
            <a href="#explore">Explore</a>
          </SiteNav>
          <HeaderButton aria-label="Notifications"><BellIcon /></HeaderButton>
          <HeaderButton aria-label="Create"><PlusIcon /><Caret /></HeaderButton>
          <HeaderButton aria-label="Account"><Avatar><AvatarSketch /></Avatar><Caret /></HeaderButton>
        </SiteHeader>

        <Page>
          <Container>
            <Columns>
              <Sidebar>
                <SideMenu>
                  <SideHeading>Personal settings</SideHeading>
                  {SETTINGS.map((s) => (
                    <SideLink key={s} href="#settings" $current={s === "SSH and GPG keys"}>{s}</SideLink>
                  ))}
                </SideMenu>
                <SideMenu>
                  <SideLink href="#developer">Developer settings</SideLink>
                </SideMenu>
              </Sidebar>
              <Main>
                <Section>
                  <Subhead>
                    <Title>SSH keys</Title>
                    <Button>New SSH key</Button>
                  </Subhead>
                  <Lead>This is a list of SSH keys associated with your account. Remove any keys that you do not recognize.</Lead>
                  <KeyCard>
                    <KeyMark><KeyIcon /><Badge>SSH</Badge></KeyMark>
                    <KeyInfo>
                      <KeyName>Mac OS for dev</KeyName>
                      <div>Added on 10 Mar 2020</div>
                      <div>Never used — Read/write</div>
                    </KeyInfo>
                    <KeyAction><Button $danger>Delete</Button></KeyAction>
                  </KeyCard>
                  <Note>
                    Check out our guide to <TextLink href="#guide">generating SSH keys</TextLink> or troubleshoot{" "}
                    <TextLink href="#problems">common SSH Problems</TextLink>.
                  </Note>
                </Section>
                <Section>
                  <Subhead>
                    <Title>GPG keys</Title>
                    <Button>New GPG key</Button>
                  </Subhead>
                  <Lead>There are no GPG keys associated with your account.</Lead>
                  <Note $tight>
                    Learn how to <TextLink href="#gpg">generate a GPG key and add it to your account</TextLink>.
                  </Note>
                </Section>
              </Main>
            </Columns>
            <Footer />
          </Container>
        </Page>
      </Window>

      <Dock>
        {DOCK.map((group, g) => (
          <React.Fragment key={g}>
            {g > 0 && <Separator />}
            {group.map(([name, Art, running]) => (
              <DockItem key={name} aria-label={name}>
                <Art />
                {running && <RunningDot />}
              </DockItem>
            ))}
          </React.Fragment>
        ))}
      </Dock>
    </Desktop>
  );
}
